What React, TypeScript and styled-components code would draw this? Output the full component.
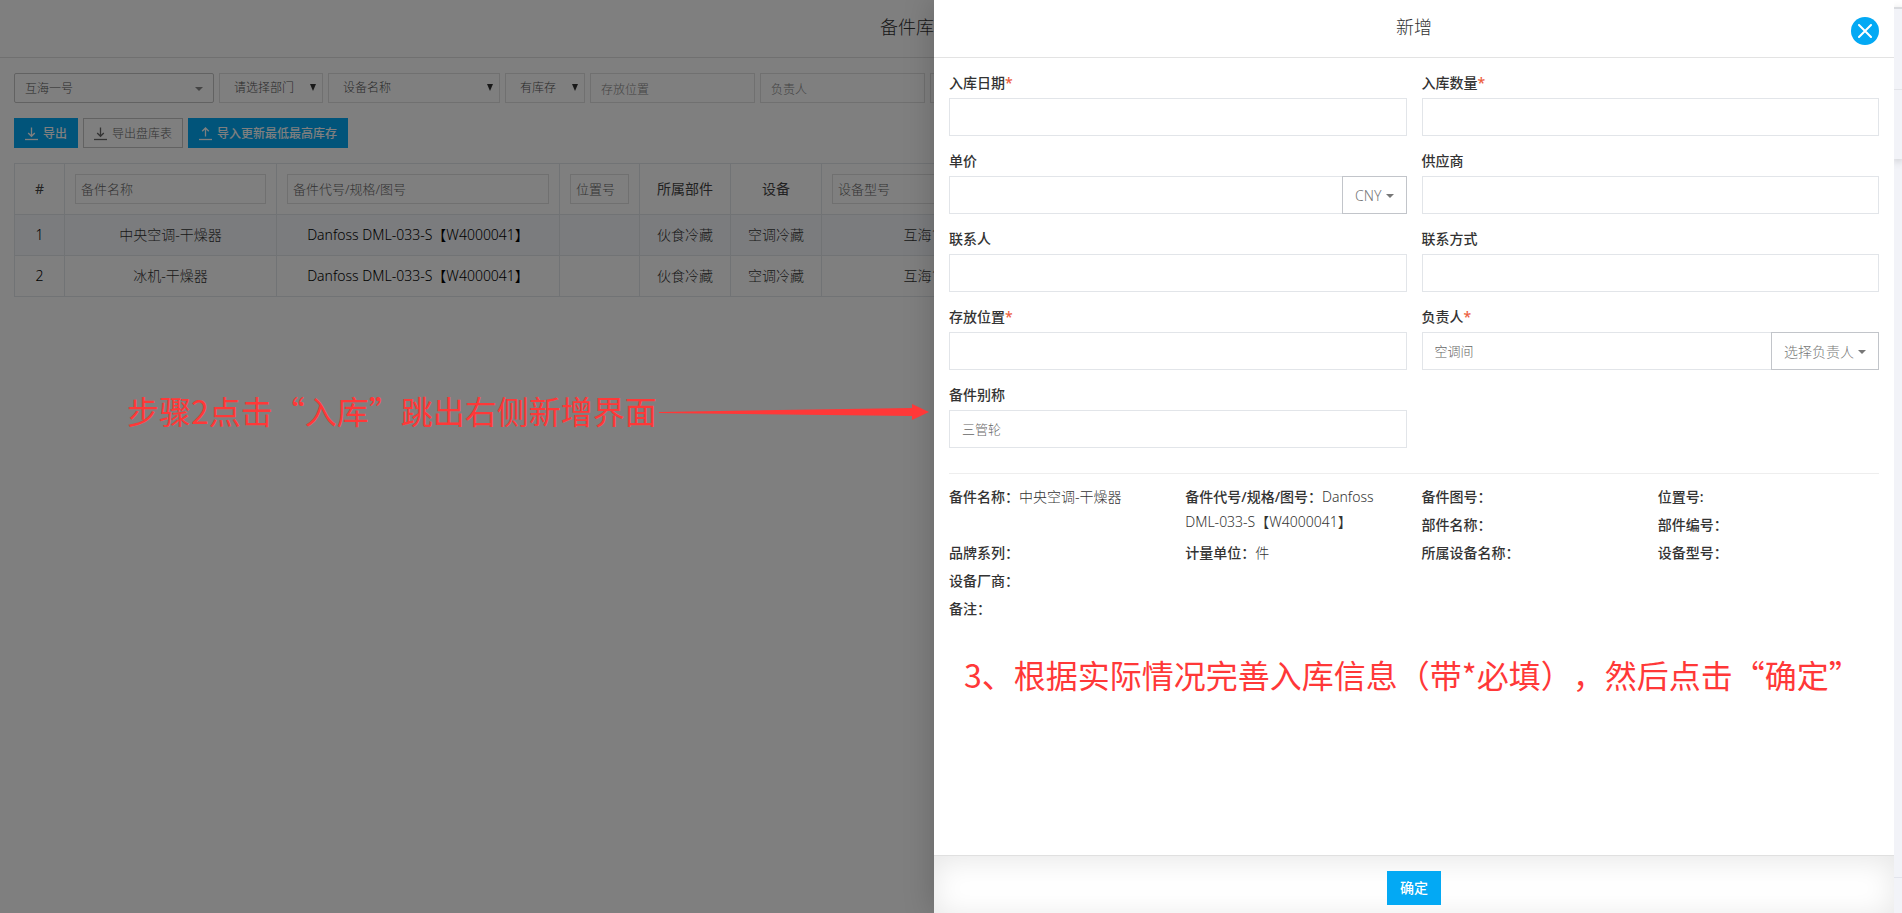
import React, { useId } from "react";
import styled, { createGlobalStyle, css } from "styled-components";

const PRIMARY = "#03a9f4";
const FONT = `"Noto Sans", "Noto Sans CJK SC", sans-serif`;
const NOTE_FONT = `"Noto Sans CJK SC", "Noto Sans", sans-serif`;

const GlobalStyle = createGlobalStyle`
  *, *::before, *::after { box-sizing: border-box; }
  html, body { margin: 0; height: 100%; }
  body {
    background: #fff;
    color: #333;
    font: 300 14px/20px ${FONT};
    overflow: hidden;
  }
  input, select, button { font: inherit; margin: 0; outline: none; }
`;

const Screen = styled.div`
  display: flex;
  min-height: 100vh;
`;

const Frame = styled.div`
  position: relative;
  flex: 1;
  min-width: 0;
  overflow: hidden;
`;

/* ---------- Outer page visible beside the frame ---------- */

const Edge = styled.aside`
  display: flex;
  flex-direction: column;
  width: 8px;
  padding-top: 7px;
  background: linear-gradient(#fff 7px, #f2f3f8 7px);
`;

const EdgeBar = styled.div`
  height: 152px;
  border-top: 2px solid #d9dbdf;
  background: linear-gradient(#f2f3f8 80px, #e3e4e9 80px, #e3e4e9 81px, #f2f3f8 81px);
  box-shadow: 0 2px 8px rgba(0, 0, 0, 0.2);
`;

const EdgeFoot = styled.div`
  height: 36px;
  margin-top: auto;
  border-top: 1px solid #e2e4ec;
`;

/* ---------- Stock list page ---------- */

const PageHeader = styled.header`
  display: flex;
  align-items: center;
  justify-content: center;
  height: 58px;
  padding: 0 62px 4px 0;
  border-bottom: 1px solid #e0e0e0;
`;

const Title = styled.h1`
  margin: 0;
  font-size: 18px;
  line-height: 24px;
  font-weight: 300;
`;

const PageBody = styled.div`
  padding: 15px 14px;
`;

const Toolbar = styled.div`
  display: flex;
  gap: 5px;
  margin-bottom: 15px;
`;

const fieldBox = css`
  height: 30px;
  border: 1px solid #e1e1e1;
  border-radius: 0;
  background: #fff;
  color: #555;
  font-size: 12px;
`;

const SelectWrap = styled.div<{ $width: number }>`
  position: relative;
  flex: none;
  width: ${(p) => p.$width}px;
`;

const Select = styled.select<{ $main?: boolean }>`
  ${fieldBox}
  display: block;
  width: 100%;
  padding: 0 10px 0 14px;
  appearance: none;
  ${(p) =>
    p.$main &&
    css`
      padding: 2px 10px 0;
      border-color: #c4c4c4;
      border-radius: 2px;
    `}
`;

const SelectMark = styled.svg<{ $main?: boolean }>`
  position: absolute;
  top: ${(p) => (p.$main ? 14 : 11)}px;
  right: ${(p) => (p.$main ? 11 : 7)}px;
  pointer-events: none;
`;

const FilterInput = styled.input`
  ${fieldBox}
  flex: none;
  width: 165px;
  padding: 2px 10px 0;
  &::placeholder { color: #888; opacity: 1; }
`;

const ToolButton = styled.button<{ $primary?: boolean }>`
  display: flex;
  align-items: center;
  gap: 5px;
  height: 30px;
  padding: 2px 10px 0;
  border: 1px solid ${(p) => (p.$primary ? PRIMARY : "#c4c4c4")};
  background: ${(p) => (p.$primary ? PRIMARY : "#fff")};
  color: ${(p) => (p.$primary ? "#fff" : "#666")};
  font-size: 12px;
  font-weight: ${(p) => (p.$primary ? 500 : 300)};
`;

const Table = styled.table`
  width: 100%;
  table-layout: fixed;
  border-collapse: collapse;
  text-align: center;
  th, td {
    height: 41px;
    padding: 0 10px;
    border: 1px solid #e3e6ea;
    font-weight: 300;
  }
  th { height: 51px; color: #444; font-weight: 400; }
  tbody tr:nth-child(odd) { background: #f7f9fd; }
`;

const DarkCell = styled.td`
  color: #000;
`;

const HeadInput = styled.input`
  ${fieldBox}
  display: block;
  width: 100%;
  padding: 0 5px;
  font-size: 13px;
  font-weight: 300;
  &::placeholder { color: #666; opacity: 1; }
`;

const Mask = styled.div`
  position: absolute;
  inset: 0;
  background: rgba(0, 0, 0, 0.5);
`;

/* ---------- Drawer ---------- */

const Drawer = styled.section`
  position: absolute;
  top: 0;
  right: 0;
  bottom: 0;
  display: flex;
  flex-direction: column;
  width: calc(50% + 13px);
  background: #fff;
  box-shadow: 0 0 30px rgba(0, 0, 0, 0.2);
`;

const DrawerHeader = styled.header`
  display: grid;
  grid-template-columns: 28px 1fr 28px;
  align-items: center;
  height: 58px;
  padding: 0 15px 4px;
  border-bottom: 1px solid #e3e3e3;
  text-align: center;
`;

const CloseButton = styled.button`
  display: grid;
  place-items: center;
  width: 28px;
  height: 28px;
  margin-top: 8px;
  padding: 0;
  border: 0;
  border-radius: 50%;
  background: ${PRIMARY};
`;

const Form = styled.form`
  display: flex;
  flex: 1;
  flex-direction: column;
`;

const FormBody = styled.div`
  flex: 1;
  padding: 15px;
`;

const FieldGrid = styled.div`
  display: grid;
  grid-template-columns: 1fr 1fr;
  gap: 15px;
  padding-bottom: 25px;
  border-bottom: 1px solid #eee;
`;

const Label = styled.label`
  display: block;
  margin-bottom: 5px;
  font-weight: 500;
`;

const Required = styled.span`
  color: #ec5f3f;
`;

const InputGroup = styled.div`
  display: flex;
`;

const TextInput = styled.input`
  flex: 1;
  min-width: 0;
  height: 38px;
  padding: 0 12px;
  border: 1px solid #e2e5e9;
  border-radius: 0;
  background: #fff;
  color: #777;
  font-size: 13px;
  &::placeholder { color: #666; opacity: 1; }
`;

const AddonButton = styled.button`
  display: flex;
  align-items: center;
  gap: 4px;
  height: 38px;
  margin-left: -1px;
  padding: 2px 12px 0;
  border: 1px solid #c2c5ca;
  background: #fff;
  color: #777;
`;

const InfoGrid = styled.dl`
  display: grid;
  grid-template-columns: repeat(4, 1fr);
  grid-auto-rows: minmax(28px, auto);
  column-gap: 15px;
  margin: 10px 0 0;
  line-height: 25px;
`;

const InfoItem = styled.div<{ $tall?: boolean; $first?: boolean }>`
  grid-row: ${(p) => (p.$tall ? "span 2" : "auto")};
  grid-column: ${(p) => (p.$first ? "1" : "auto")};
  dt, dd { display: inline; margin: 0; }
  dt { font-weight: 500; }
`;

const DrawerFooter = styled.footer`
  display: flex;
  justify-content: center;
  padding: 15px 0 8px;
  border-top: 1px solid #e0e0e0;
  box-shadow: inset 0 4px 30px rgba(0, 0, 0, 0.1);
`;

const SubmitButton = styled.button`
  height: 34px;
  padding: 0 13px;
  border: 0;
  background: ${PRIMARY};
  color: #fff;
  font-weight: 500;
`;

/* ---------- Guide notes drawn over the page ---------- */

const Note = styled.p<{ $x: number; $y: number }>`
  position: absolute;
  left: ${(p) => p.$x}px;
  top: ${(p) => p.$y}px;
  display: flex;
  align-items: center;
  gap: 2px;
  margin: 0;
  color: #ff3838;
  font: 400 32px/40px ${NOTE_FONT};
  text-spacing-trim: space-all;
  white-space: nowrap;
  svg { margin-top: 4px; }
`;

/* ---------- Icons ---------- */

const Caret = () => (
  <svg width="8" height="4" viewBox="0 0 8 4" aria-hidden="true">
    <path d="M0 0h8L4 4z" fill="currentColor" />
  </svg>
);

const TransferIcon = ({ up }: { up?: boolean }) => (
  <svg width="13" height="14" viewBox="0 0 13 14" fill="none" stroke="currentColor" strokeWidth="1.3" aria-hidden="true">
    <path d="M0 12.5h13" />
    <path d={up ? "M6.5 9.5V1M3.2 4.3L6.5 1l3.3 3.3" : "M6.5 0.5v8.8M3.2 6L6.5 9.3L9.8 6"} />
  </svg>
);

const Arrow = () => (
  <svg width="270" height="18" viewBox="0 0 270 18" aria-hidden="true">
    <path d="M0 9L253 5V1l17 8-17 8v-4L0 10z" fill="#ff3838" />
  </svg>
);

/* ---------- Parts ---------- */

function Filter({ label, width, main }: { label: string; width: number; main?: boolean }) {
  return (
    <SelectWrap $width={width}>
      <Select $main={main} aria-label={label}>
        <option>{label}</option>
      </Select>
      {main ? (
        <SelectMark $main width="8" height="4" viewBox="0 0 8 4" aria-hidden="true">
          <path d="M0 0h8L4 4z" fill="#888" />
        </SelectMark>
      ) : (
        <SelectMark width="6" height="7" viewBox="0 0 6 7" aria-hidden="true">
          <path d="M0 0h6L3 7z" fill="#333" />
        </SelectMark>
      )}
    </SelectWrap>
  );
}

interface FieldProps {
  label: string;
  required?: boolean;
  placeholder?: string;
  addon?: string;
}

function Field({ label, required, placeholder, addon }: FieldProps) {
  const id = useId();
  return (
    <div>
      <Label htmlFor={id}>
        {label}
        {required && <Required>*</Required>}
      </Label>
      <InputGroup>
        <TextInput id={id} type="text" placeholder={placeholder} />
        {addon && (
          <AddonButton type="button">
            {addon}
            <Caret />
          </AddonButton>
        )}
      </InputGroup>
    </div>
  );
}

const fields: FieldProps[] = [
  { label: "入库日期", required: true },
  { label: "入库数量", required: true },
  { label: "单价", addon: "CNY" },
  { label: "供应商" },
  { label: "联系人" },
  { label: "联系方式" },
  { label: "存放位置", required: true },
  { label: "负责人", required: true, placeholder: "空调间", addon: "选择负责人" },
  { label: "备件别称", placeholder: "三管轮" },
];

const info: { label: string; value?: string; tall?: boolean; first?: boolean }[] = [
  { label: "备件名称：", value: "中央空调-干燥器", tall: true },
  { label: "备件代号/规格/图号：", value: "Danfoss DML-033-S【W4000041】", tall: true },
  { label: "备件图号：" },
  { label: "位置号:" },
  { label: "部件名称：" },
  { label: "部件编号：" },
  { label: "品牌系列：" },
  { label: "计量单位：", value: "件" },
  { label: "所属设备名称：" },
  { label: "设备型号：" },
  { label: "设备厂商：" },
  { label: "备注：", first: true },
];

const rows = ["中央空调-干燥器", "冰机-干燥器"];
const columnWidths = [50, 212, 283, 80, 91, 91, 214];

export default function App() {
  return (
    <Screen>
      <GlobalStyle />
      <Frame>
        <main>
          <PageHeader>
            <Title>备件库存</Title>
          </PageHeader>
          <PageBody>
            <Toolbar>
              <Filter label="互海一号" width={200} main />
              <Filter label="请选择部门" width={104} />
              <Filter label="设备名称" width={172} />
              <Filter label="有库存" width={80} />
              <FilterInput placeholder="存放位置" aria-label="存放位置" />
              <FilterInput placeholder="负责人" aria-label="负责人" />
              <FilterInput />
            </Toolbar>
            <Toolbar>
              <ToolButton $primary type="button"><TransferIcon />导出</ToolButton>
              <ToolButton type="button"><TransferIcon />导出盘库表</ToolButton>
              <ToolButton $primary type="button"><TransferIcon up />导入更新最低最高库存</ToolButton>
            </Toolbar>
            <Table>
              <colgroup>
                {columnWidths.map((width, i) => (
                  <col key={i} width={width} />
                ))}
                <col />
              </colgroup>
              <thead>
                <tr>
                  <th>#</th>
                  <th><HeadInput placeholder="备件名称" aria-label="备件名称" /></th>
                  <th><HeadInput placeholder="备件代号/规格/图号" aria-label="备件代号/规格/图号" /></th>
                  <th><HeadInput placeholder="位置号" aria-label="位置号" /></th>
                  <th>所属部件</th>
                  <th>设备</th>
                  <th><HeadInput placeholder="设备型号" aria-label="设备型号" /></th>
                  <th />
                </tr>
              </thead>
              <tbody>
                {rows.map((name, i) => (
                  <tr key={name}>
                    <DarkCell>{i + 1}</DarkCell>
                    <td>{name}</td>
                    <DarkCell>Danfoss DML-033-S【W4000041】</DarkCell>
                    <td />
                    <td>伙食冷藏</td>
                    <td>空调冷藏</td>
                    <td>互海1号</td>
                    <td />
                  </tr>
                ))}
              </tbody>
            </Table>
          </PageBody>
        </main>
        <Mask />
        <Drawer role="dialog" aria-label="新增">
          <DrawerHeader>
            <span />
            <Title as="h2">新增</Title>
            <CloseButton type="button" aria-label="关闭">
              <svg width="14" height="14" viewBox="0 0 14 14" stroke="#fff" strokeWidth="2" strokeLinecap="round" aria-hidden="true">
                <path d="M1 1l12 12M13 1L1 13" />
              </svg>
            </CloseButton>
          </DrawerHeader>
          <Form onSubmit={(e: React.FormEvent) => e.preventDefault()}>
            <FormBody>
              <FieldGrid>
                {fields.map((field) => (
                  <Field key={field.label} {...field} />
                ))}
              </FieldGrid>
              <InfoGrid>
                {info.map(({ label, value, tall, first }) => (
                  <InfoItem key={label} $tall={tall} $first={first}>
                    <dt>{label}</dt>
                    <dd>{value}</dd>
                  </InfoItem>
                ))}
              </InfoGrid>
            </FormBody>
            <DrawerFooter>
              <SubmitButton type="submit">确定</SubmitButton>
            </DrawerFooter>
          </Form>
        </Drawer>
        <Note $x={127} $y={390}>
          步骤2点击“入库”跳出右侧新增界面
          <Arrow />
        </Note>
        <Note $x={964} $y={654}>3、根据实际情况完善入库信息（带*必填），然后点击“确定”</Note>
      </Frame>
      <Edge>
        <EdgeBar />
        <EdgeFoot />
      </Edge>
    </Screen>
  );
}
